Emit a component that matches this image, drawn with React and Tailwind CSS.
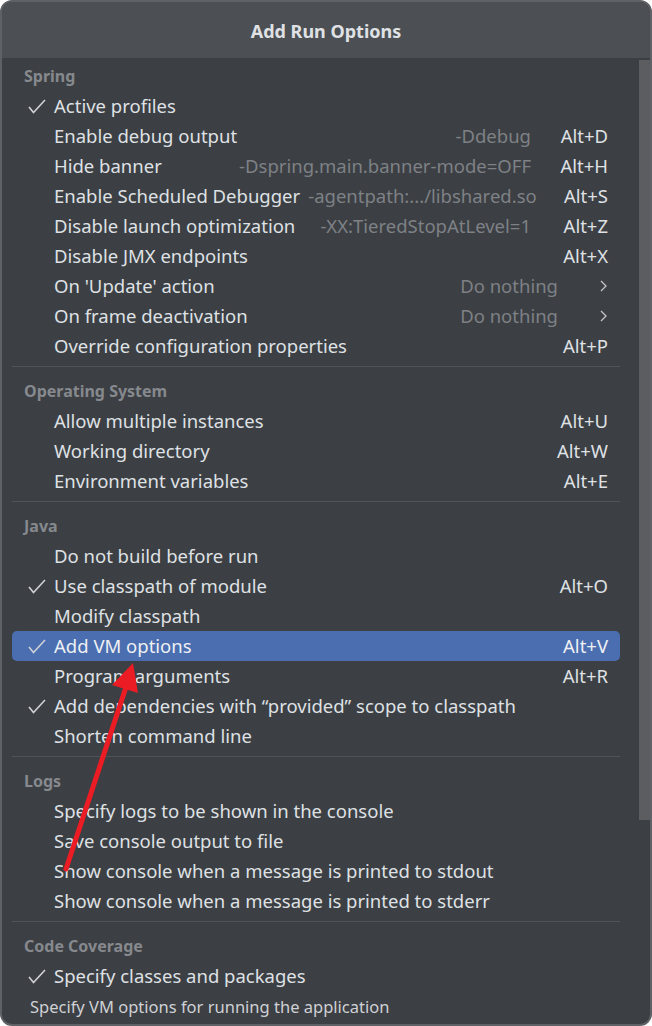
const sections = [
  {
    title: "Spring",
    items: [
      { label: "Active profiles", checked: true },
      { label: "Enable debug output", hint: "-Ddebug", shortcut: "Alt+D" },
      { label: "Hide banner", hint: "-Dspring.main.banner-mode=OFF", shortcut: "Alt+H" },
      { label: "Enable Scheduled Debugger", hint: "-agentpath:.../libshared.so", shortcut: "Alt+S" },
      { label: "Disable launch optimization", hint: "-XX:TieredStopAtLevel=1", shortcut: "Alt+Z" },
      { label: "Disable JMX endpoints", shortcut: "Alt+X" },
      { label: "On 'Update' action", hint: "Do nothing", submenu: true },
      { label: "On frame deactivation", hint: "Do nothing", submenu: true },
      { label: "Override configuration properties", shortcut: "Alt+P" },
    ],
  },
  {
    title: "Operating System",
    items: [
      { label: "Allow multiple instances", shortcut: "Alt+U" },
      { label: "Working directory", shortcut: "Alt+W" },
      { label: "Environment variables", shortcut: "Alt+E" },
    ],
  },
  {
    title: "Java",
    items: [
      { label: "Do not build before run" },
      { label: "Use classpath of module", checked: true, shortcut: "Alt+O" },
      { label: "Modify classpath" },
      { label: "Add VM options", checked: true, shortcut: "Alt+V", selected: true },
      { label: "Program arguments", shortcut: "Alt+R" },
      { label: "Add dependencies with \u201Cprovided\u201D scope to classpath", checked: true },
      { label: "Shorten command line" },
    ],
  },
  {
    title: "Logs",
    items: [
      { label: "Specify logs to be shown in the console" },
      { label: "Save console output to file" },
      { label: "Show console when a message is printed to stdout" },
      { label: "Show console when a message is printed to stderr" },
    ],
  },
  {
    title: "Code Coverage",
    items: [{ label: "Specify classes and packages", checked: true }],
  },
];

function Check() {
  return (
    <svg width="18" height="15" viewBox="0 0 18 15" fill="none">
      <polyline points="1,8 5.5,13.5 17,1" stroke="currentColor" strokeWidth="1.6" />
    </svg>
  );
}

function Row({ item }) {
  return (
    <div
      className={`flex items-center h-[30px] pl-[16px] pr-[12px] rounded-[5px] whitespace-nowrap ${
        item.selected ? "bg-[#4a6eb0] text-[#eef0f4]" : "text-[#dfe1e5]"
      }`}
    >
      <div className="w-[26px] shrink-0 flex items-center text-[#cfd1d5]">
        {item.checked && <Check />}
      </div>
      <span>{item.label}</span>
      <div className="flex-1" />
      {item.hint && (
        <span className={`ml-[8px] text-[#7e8186] ${item.submenu ? "" : "mr-[2px]"}`}>{item.hint}</span>
      )}
      {item.submenu ? (
        <div className="w-[50px] flex justify-end pr-[1px]">
          <svg width="7" height="12" viewBox="0 0 7 12" fill="none">
            <polyline points="1,1 6,6 1,11" stroke="#c3c5c9" strokeWidth="1.3" />
          </svg>
        </div>
      ) : (
        <span className="w-[75px] text-right">{item.shortcut}</span>
      )}
    </div>
  );
}

export default function App() {
  return (
    <div className="relative w-[652px] h-[1026px] bg-[#3c3f43] border-2 border-[#5e6165] rounded-[12px] overflow-hidden flex flex-col font-['Noto_Sans',sans-serif] text-[18.5px]">
      {/* HEADER */}
      <div className="h-[56px] shrink-0 bg-[#4c4f53] flex items-center justify-center pt-[2px]">
        <h1 className="text-[18px] font-bold text-[#dfe1e5]">Add Run Options</h1>
      </div>

      {/* LIST + SCROLLBAR */}
      <div className="flex h-[933px] shrink-0">
        <div className="flex-1 pt-[3px] pl-[10px] pr-[19px] overflow-hidden">
          {sections.map((section, i) => (
            <div key={section.title}>
              {i > 0 && <div className="mt-[5px] mb-[9px] h-px bg-[#505357]" />}
              <div className="h-[30px] flex items-center pl-[12px] text-[16px] font-bold text-[#86898e]">
                {section.title}
              </div>
              {section.items.map((item) => (
                <Row key={item.label} item={item} />
              ))}
            </div>
          ))}
        </div>
        <div className="w-[11px] pt-[2px]">
          <div className="h-[760px] bg-[#5b5d61]" />
        </div>
      </div>

      {/* FOOTER */}
      <div className="flex-1 flex items-center pl-[28px] text-[16.5px] text-[#cfd1d5]">
        Specify VM options for running the application
      </div>

      {/* ANNOTATION ARROW */}
      <svg className="absolute -left-[2px] -top-[2px] pointer-events-none" width="652" height="1026">
        <line x1="66" y1="869" x2="127" y2="684" stroke="#ec1c24" strokeWidth="5" strokeLinecap="round" />
        <polygon points="133,663 112,685 138,693" fill="#ec1c24" />
      </svg>
    </div>
  );
}
